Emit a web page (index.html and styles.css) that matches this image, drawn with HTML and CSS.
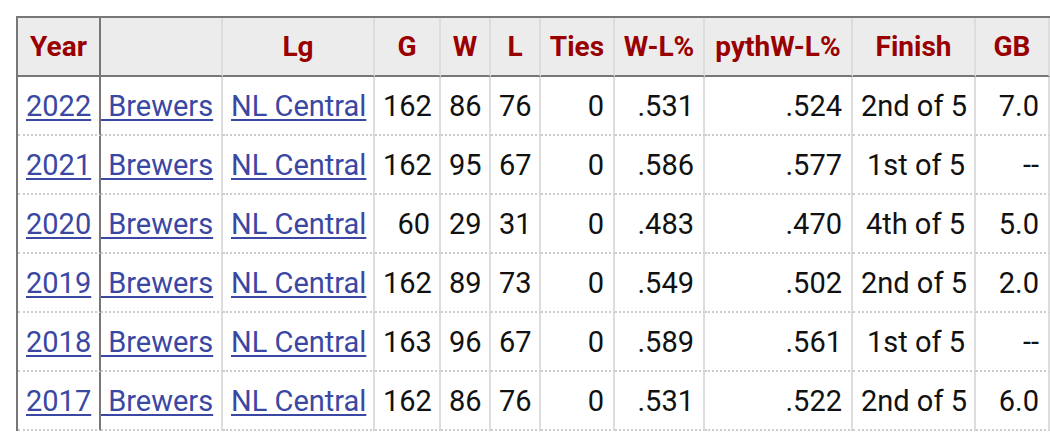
FILE: index.html
```html
<!DOCTYPE html>
<html>
<head>
<meta charset="utf-8">
<link rel="stylesheet" href="styles.css">
</head>
<body>
<table class="stats">
  <thead>
    <tr>
      <th class="c-year">Year</th>
      <th class="c-tm"></th>
      <th class="c-lg">Lg</th>
      <th class="c-g">G</th>
      <th class="c-w">W</th>
      <th class="c-l">L</th>
      <th class="c-ties">Ties</th>
      <th class="c-wl">W-L%</th>
      <th class="c-py">pythW-L%</th>
      <th class="c-fin">Finish</th>
      <th class="c-gb">GB</th>
    </tr>
  </thead>
  <tbody>
    <tr><td class="left"><a href="#">2022</a></td><td class="tm"><a href="#">&nbsp;Brewers</a></td><td class="left"><a href="#">NL Central</a></td><td>162</td><td>86</td><td>76</td><td>0</td><td>.531</td><td>.524</td><td>2nd of 5</td><td>7.0</td></tr>
    <tr><td class="left"><a href="#">2021</a></td><td class="tm"><a href="#">&nbsp;Brewers</a></td><td class="left"><a href="#">NL Central</a></td><td>162</td><td>95</td><td>67</td><td>0</td><td>.586</td><td>.577</td><td>1st of 5</td><td>--</td></tr>
    <tr><td class="left"><a href="#">2020</a></td><td class="tm"><a href="#">&nbsp;Brewers</a></td><td class="left"><a href="#">NL Central</a></td><td>60</td><td>29</td><td>31</td><td>0</td><td>.483</td><td>.470</td><td>4th of 5</td><td>5.0</td></tr>
    <tr><td class="left"><a href="#">2019</a></td><td class="tm"><a href="#">&nbsp;Brewers</a></td><td class="left"><a href="#">NL Central</a></td><td>162</td><td>89</td><td>73</td><td>0</td><td>.549</td><td>.502</td><td>2nd of 5</td><td>2.0</td></tr>
    <tr><td class="left"><a href="#">2018</a></td><td class="tm"><a href="#">&nbsp;Brewers</a></td><td class="left"><a href="#">NL Central</a></td><td>163</td><td>96</td><td>67</td><td>0</td><td>.589</td><td>.561</td><td>1st of 5</td><td>--</td></tr>
    <tr><td class="left"><a href="#">2017</a></td><td class="tm"><a href="#">&nbsp;Brewers</a></td><td class="left"><a href="#">NL Central</a></td><td>162</td><td>86</td><td>76</td><td>0</td><td>.531</td><td>.522</td><td>2nd of 5</td><td>6.0</td></tr>
  </tbody>
</table>
</body>
</html>
```
FILE: styles.css
```css
html, body {
  margin: 0;
  padding: 0;
  background: #fff;
}
body {
  padding: 16px 0 0 16px;
  font-family: Roboto, "Liberation Sans", sans-serif;
  font-size: 29px;
  color: #111;
}
.stats {
  border-collapse: separate;
  border-spacing: 0;
  table-layout: fixed;
  width: 1034px;
  border-top: 2px solid #777;
  border-left: 2px solid #777;
}
.stats th,
.stats td {
  box-sizing: border-box;
  padding: 0 9px 0 8px;
  border-right: 2px solid #ddd;
  white-space: nowrap;
  overflow: hidden;
  vertical-align: middle;
}
.stats th {
  height: 59px;
  background: #ececec;
  color: #900;
  font-size: 28px;
  font-weight: 700;
  text-align: center;
  border-bottom: 2px solid #777;
  padding: 0 4px;
}
.stats td {
  height: 59px;
  text-align: right;
  border-bottom: 2px dotted #ccc;
}
.stats th:first-child,
.stats td:first-child {
  border-right-color: #777;
}
.stats td.left {
  text-align: left;
}
.stats td.tm {
  text-align: left;
  padding-left: 0;
}
.stats a {
  color: #3a47a3;
  text-decoration: underline;
  text-underline-offset: 3px;
}
.c-year { width: 83px; }
.c-tm { width: 122px; }
.c-lg { width: 152px; }
.c-g { width: 66px; }
.c-w { width: 50px; }
.c-l { width: 50px; }
.c-ties { width: 74px; }
.c-wl { width: 90px; }
.c-py { width: 148px; }
.c-fin { width: 123px; }
.c-gb { width: 74px; }
```
